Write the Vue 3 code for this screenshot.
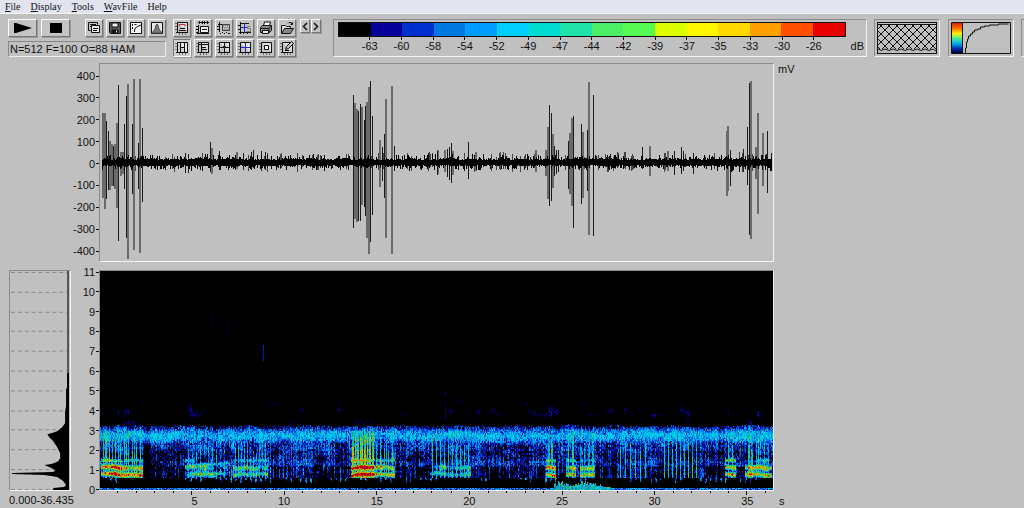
<script setup>
import { onMounted, ref } from 'vue'

const menus = [
  { key: 'F', rest: 'ile' },
  { key: 'D', rest: 'isplay' },
  { key: 'T', rest: 'ools' },
  { key: 'W', rest: 'avFile' },
  { key: '', rest: 'Help' }
]

const palette = ['#000000', '#08009a', '#0030d0', '#0078e0', '#009cff', '#00d0ff', '#00dcd0', '#20e2a8',
  '#4cee68', '#58fa54', '#dcff00', '#fff600', '#ffd800', '#ffa000', '#ff5000', '#e60000']
const levels = ['-63', '-60', '-58', '-54', '-52', '-49', '-47', '-44', '-42', '-39', '-37', '-35', '-33', '-30', '-26']
const millivolts = [400, 300, 200, 100, 0, -100, -200, -300, -400]
const kilohertz = [11, 10, 9, 8, 7, 6, 5, 4, 3, 2, 1, 0]
const seconds = [5, 10, 15, 20, 25, 30, 35]

const frame = 'M2.5 1.5v10M1 11.5h12M2.5 1.5h10v10'
const pinned = 'M.5 2.5h1M.5 5.5h1M.5 8.5h1M4.5 12.5v1M7.5 12.5v1M10.5 12.5v1'
const fileTools = [
  { name: 'Copy', parts: [{ d: 'M1.5 1.5h9v2M1.5 1.5v8h2' }, { d: 'M4.5 4.5h8v7h-8zM6 7.5h5M6 9.5h4', f: '#eee' }, { d: 'M3 3.5h6M3 5.5h1' }] },
  { name: 'Save', parts: [{ d: 'M1.5 1.5h11v11h-10l-1-1z', f: '#555' }, { d: 'M4 2h6v4h-6z', f: '#eee' }, { d: 'M4 9h6v3h-6z', f: '#111' }, { d: 'M8.5 9.5v2', s: '#eee' }] },
  { name: 'Gamma', parts: [{ d: 'M1.5 1.5h11v11h-11z', f: '#f4f4f4' }, { d: 'M3.5 3v2M3.5 6v2M5.5 3.5h2M5.5 11v-2l1-2 1-1 2-1 3-1' }] },
  { name: 'Window', parts: [{ d: 'M1.5 1.5h11v11h-11z', f: '#e8e8e8' }, { d: 'M2 12l3-4 1-4 1-1 1 1 1 4 3 4z', f: '#777', s: '#555' }] }
]
const viewTools = [
  { name: 'Spectrogram', parts: [{ d: frame, f: '#ddd' }, { d: pinned }, { d: 'M4 5.5v-2h6v2', s: '#c03030' }, { d: 'M5 7.5h5M4 9.5h7' }] },
  { name: 'Envelope', parts: [{ d: 'M2 1.5h11M3.5 0v3M6.5 0v3M8.5 0v3M11.5 0v3M2.5 4v8M1 12.5h12' }, { d: 'M4.5 5.5h8v6h-8zM6 8.5h5', f: '#eee' }, { d: 'M0 5.5h2M0 8.5h2M0 11.5h2' }] },
  { name: 'Zoom area', parts: [{ d: 'M2.5 1v10M1 3.5h11' }, { d: 'M5.5 3.5h7v6h-7z', f: '#999', s: '#444' }, { d: 'M7 5.5h1M9 5.5h1M11 5.5h1M6 7.5h1M8 7.5h1M10 7.5h1', s: '#ddd' }, { d: 'M3 12.5h1M5 11.5h1M7 12.5h1M9 11.5h1M11 12.5h2M0 5.5h2M0 8.5h2' }] },
  { name: 'Statistics', parts: [{ d: 'M2.5 1v12M1 11.5h12M0 4.5h2M0 8.5h2M5.5 12v1M9.5 12v1M3 2.5h8' }, { d: 'M6.5 2v9M3 6.5h6', s: '#2424d0' }, { d: 'M12.5 5.5h-3v2h3v3h-4', s: '#777' }] },
  { name: 'Print', parts: [{ d: 'M4.5 5l1-4h6l-1 4', f: '#fff' }, { d: 'M1.5 6.5l2-2h9v5l-2 2h-9z', f: '#888' }, { d: 'M2 7.5h8v4M10.5 7l2-2' }, { d: 'M3.5 9.5h6v3h-6z', f: '#eee' }] },
  { name: 'Open', parts: [{ d: 'M1.5 12.5v-8h4l1 1h4v2', f: '#ddd' }, { d: 'M1.5 12.5l3-5h9l-3 5z', f: '#888' }, { d: 'M8 2.5l1-1h2l1 2M10.5 3.5h2v-2' }] }
]
const gridTools = [
  { name: 'Columns', on: true, parts: [{ d: frame, f: '#e8e8e8' }, { d: pinned }, { d: 'M5.5 2v9M9.5 2v9M6 6.5h3' }] },
  { name: 'Rows', parts: [{ d: frame, f: '#ddd' }, { d: pinned }, { d: 'M3 3.5h9M5.5 2v9M6 6.5h4M6 8.5h5' }] },
  { name: 'Cross', parts: [{ d: frame, f: '#ddd' }, { d: pinned }, { d: 'M3 6.5h9M7.5 2v9M6 5.5h3' }] },
  { name: 'Marker', parts: [{ d: frame, f: '#e8e8e8' }, { d: pinned }, { d: 'M3 6.5h9M7.5 2v9', s: '#2424d0' }] },
  { name: 'Box', parts: [{ d: frame, f: '#ddd' }, { d: pinned }, { d: 'M5.5 4.5h4v4h-4z', f: '#fff' }] },
  { name: 'Edit', parts: [{ d: frame, f: '#ddd' }, { d: pinned }, { d: 'M5.5 8.5l1-3 5-5 2 2-5 5z', f: '#bbb' }, { d: 'M5 9.5h4' }] }
]

// [x, height above zero, depth below zero, heavy stroke]
const spikes = [
  [3, 49, 36, 1], [5, 49, 47, 1], [6, 41, 37, 0], [8, 31, 28, 0], [10, 21, 28, 1], [12, 18, 24, 1], [13, 16, 24, 0],
  [15, 18, 27, 1], [17, 39, 46, 1], [18, 77, 79, 0], [21, 10, 14, 1], [23, 10, 12, 1], [24, 38, 27, 0], [26, 66, 76, 0],
  [28, 78, 97, 1], [32, 38, 32, 0], [34, 83, 88, 1], [38, 19, 27, 0], [40, 83, 91, 1], [42, 34, 40, 0],
  [85, 9, 11, 0], [88, 8, 11, 0], [110, 20, 10, 0], [112, 14, 12, 1], [119, 11, 8, 0], [137, 10, 7, 1], [143, 9, 8, 0],
  [151, 10, 8, 0], [153, 12, 6, 0], [161, 11, 9, 0], [165, 10, 8, 0],
  [253, 67, 66, 0], [255, 59, 57, 1], [257, 53, 60, 1], [258, 51, 59, 0], [260, 58, 59, 0], [262, 55, 43, 1],
  [264, 42, 45, 0], [265, 56, 54, 0], [267, 60, 76, 1], [269, 75, 92, 1], [270, 81, 80, 0], [272, 46, 53, 0],
  [280, 22, 25, 1], [282, 15, 19, 0], [284, 28, 36, 0], [286, 63, 76, 1], [292, 76, 92, 1], [294, 16, 9, 0],
  [337, 11, 13, 0], [338, 12, 12, 1], [345, 12, 10, 1], [347, 13, 15, 0], [349, 15, 18, 0], [351, 19, 21, 0], [353, 11, 13, 1],
  [368, 20, 17, 0], [376, 10, 9, 1], [436, 12, 10, 1], [446, 12, 14, 1], [448, 35, 37, 1], [449, 57, 44, 0], [451, 49, 39, 0],
  [453, 28, 26, 1], [454, 16, 14, 0], [456, 12, 12, 0], [458, 12, 10, 0], [468, 21, 27, 0], [470, 29, 32, 1], [472, 44, 44, 1],
  [473, 46, 66, 0], [481, 38, 42, 0], [483, 30, 36, 1], [487, 32, 29, 0], [489, 80, 73, 1], [493, 67, 74, 0],
  [542, 15, 7, 0], [550, 16, 14, 1], [568, 11, 9, 1], [574, 11, 13, 0], [581, 15, 12, 0], [583, 11, 9, 0], [593, 9, 12, 0],
  [627, 31, 34, 1], [628, 36, 29, 1], [630, 12, 24, 0], [643, 13, 10, 0], [647, 35, 23, 0], [649, 79, 73, 0],
  [651, 81, 77, 1], [656, 15, 17, 1], [658, 49, 52, 1], [663, 29, 24, 1], [667, 31, 31, 0], [671, 9, 7, 0]
]

function generator(seed) {
  let s = seed
  return () => {
    s = (s + 0x6d2b79f5) | 0
    let t = Math.imul(s ^ (s >>> 15), 1 | s)
    t = (t + Math.imul(t ^ (t >>> 7), 61 | t)) ^ t
    return ((t ^ (t >>> 14)) >>> 0) / 4294967296
  }
}

const heavy = spikes.filter(p => p[3]).map(([x, u, d]) => `M${x} ${98 - u}V${98 + d}`).join('')
const fine = spikes.filter(p => !p[3]).map(([x, u, d]) => `M${x}.5 ${98 - u}V${98 + d}`).join('')

const rw = generator(7)
let noise = ''
let faint = ''
let swell = 0.5
for (let x = 2; x < 672; x++) {
  swell = swell * 0.75 + rw() * 0.25
  const burst = (x > 80 && x < 120) || (x > 320 && x < 385) || x > 610 ? 1.3 : 1
  const up = 1 + swell * 3 + rw() ** 3 * 5 * burst
  const down = 1 + swell * 3 + rw() ** 3 * 5 * burst
  noise += `M${x}.5 ${(98 - up).toFixed(0)}V${(99 + down).toFixed(0)}`
  if (rw() < 0.1) faint += `M${x}.5 ${(93 - rw() * 5).toFixed(0)}V${(103 + rw() * 5).toFixed(0)}`
}

const screen = ref(null)

// [start, end, overall level, stripe pitch, tone level]
const calls = [
  [1, 20, 6, 3, 6], [20, 43, 6.5, 4, 4], [85, 128, 3.5, 4, 1.5], [133, 168, 4, 3, 3], [251, 274, 8, 3, 6], [274, 295, 5.5, 4, 4],
  [330, 371, 5.5, 4, 1], [446, 456, 6, 4, 6], [466, 476, 6, 4, 4], [480, 495, 4, 4, 4], [517, 548, 5, 5, 0], [563, 600, 5.5, 4, 0],
  [625, 636, 5, 4, 6], [645, 660, 6, 4, 4], [660, 672, 4, 4, 4]
]

function drawSpectrogram() {
  const canvas = screen.value
  const w = canvas.width
  const h = canvas.height
  const ctx = canvas.getContext('2d')
  const image = ctx.createImageData(w, h)
  const rgb = palette.map(c => [1, 3, 5].map(i => parseInt(c.slice(i, i + 2), 16)))
  const rand = generator(42)
  const bell = (f, c, s) => Math.exp(-((f - c) ** 2) / (2 * s * s))
  const put = (x, y, v) => {
    const k = Math.max(0, Math.min(15, v))
    const a = rgb[Math.floor(k)]
    const b = rgb[Math.min(15, Math.ceil(k))]
    const m = k % 1
    const dim = k > 6 ? 0.8 : 0.98
    const o = (y * w + x) * 4
    for (let i = 0; i < 3; i++) image.data[o + i] = (a[i] * (1 - m) + b[i] * m) * dim
    image.data[o + 3] = 255
  }
  const patch = []
  for (let i = 0; i < 4000; i++) patch.push(rand())
  const smooth = (x, f) => {
    const gx = x / 7
    const gy = f * 3.2
    const ix = Math.floor(gx)
    const iy = Math.floor(gy)
    const at = (i, j) => patch[(i + j * 97) % 4000]
    const tx = gx - ix
    const ty = gy - iy
    return (at(ix, iy) * (1 - tx) + at(ix + 1, iy) * tx) * (1 - ty) + (at(ix, iy + 1) * (1 - tx) + at(ix + 1, iy + 1) * tx) * ty
  }
  for (let x = 0; x < w; x++) {
    const column = rand() - 0.5
    const streak = rand() < 0.2 ? 1.8 : 0
    const call = calls.find(c => x >= c[0] && x < c[1])
    const peak = spikes.reduce((m, p) => (p[0] === x ? Math.max(m, p[1]) : m), 0)
    const quiet = x > 43 && x < 50
    const sparse = x > 43 && x < 85
    const top = 3.3 + smooth(x, 12) * 0.2 - 0.15
    let n = 0
    for (let y = 0; y < h; y++) {
      const f = (h - y) / 19.9
      if (y % 2 === 0 || rand() < 0.3) n = rand() - 0.5
      const s = smooth(x, f) - 0.5
      let v = -3
      if (f < top) {
        v = 4.6 * bell(f, 2.75, 0.28) + n * 4.2 + column * 1.2 + s * 1.8 - (f > 3.1 ? 0.4 : 0)
        v = Math.min(v, 5.8)
        if (f < 2.55) v = Math.max(v, 0.8 + n * 3.8 + column * 2.4 + s * 2.8 + (f > 2 ? 0.8 : 0) - (sparse ? 1 : 0))
        if (f < 1.5 && f > 1.25) v += 0.8
        if (quiet) v -= f < 2.4 ? 2 : 0.8
        if (f < 1.2 && !call) v += streak - 1
        if (f < 0.65) v = smooth(x, 9) > 0.55 && x % 5 < 2 && f > 0.48 - column * 0.2 ? 3 + n * 4 : -1
        if (f < 0.15) v = 2.8 + n * 5 + s * 2
      } else if (f < 4.6) {
        v = s * 4.4 + n * 1.6 - 2 + bell(f, 3.9, 0.18) * 0.9
      }
      if (call && f > 0.65 && f < 3) {
        const on = x % call[3] === 0 || peak > 40
        const fade = Math.min(1, (3.1 - f) / 1.5)
        if (on) v = Math.max(v, call[2] * (0.55 + fade * 0.65) + n * 5 + s * 4)
        else if (f < 1.8) v -= 0.2
        const wobble = (smooth(x, 10) - 0.5) * 0.12
        const tone = Math.max(bell(f, 0.8 + wobble, 0.1), bell(f, 1.15 + wobble, 0.11), bell(f, 1.5, 0.07) * 0.6)
        if (call[4]) v = Math.max(v, (call[2] + call[4] * 1.6) * tone + n * 5 + s * 8 + column * 3 - (on ? 0 : 2))
      }
      if (peak > 35 && f > 2.4 && f < 4) v += f < 3.3 ? 1.4 : 1.2
      if (x > 88 && x < 130) {
        const rise = 0.78 + (x - 88) / 300
        v += bell(f, rise, 0.06) * 2.5 + bell(f, rise + 0.45, 0.06) * 4
      }
      if (x > 453 && x < 512 && f < 0.5) {
        const lobe = Math.max(bell(x, 461, 6), bell(x, 487, 10))
        if (f < 0.14 + lobe * (0.1 + (column + 0.5) * 0.3)) v = 5.5 + n * 6
      }
      if (x === 163 && f > 6.5 && f < 7.3) v = 1.6 + n
      if ((x === 112 || x === 128) && f > 7.7 && f < 8.8) v = n * 2
      if (x === 345 && f > 3.6 && f < 4.9) v = 0.4 + n * 2
      put(x, y, v)
    }
  }
  ctx.putImageData(image, 0, 0)
}

onMounted(drawSpectrogram)

const xTicks = Array.from({ length: 36 }, (_, i) => {
  const x = Math.round((i + 1) * 18.47)
  return `M${x}.5 0v${(i + 1) % 5 ? 2 : 4}`
}).join('')
</script>

<template>
  <div class="app">
    <nav class="menu">
      <button v-for="m in menus" :key="m.rest"><u>{{ m.key }}</u>{{ m.rest }}</button>
    </nav>

    <header class="toolbar">
      <section class="transport">
        <div class="row">
          <button class="tool wide" aria-label="Play"><svg width="18" height="10"><path d="M0 0h2L18 5L2 10H0z" /></svg></button>
          <button class="tool wide" aria-label="Stop"><svg width="12" height="10"><path d="M0 0h12v10H0z" /></svg></button>
          <div class="icons files">
            <button v-for="t in fileTools" :key="t.name" class="tool" :aria-label="t.name">
              <svg width="14" height="14" viewBox="0 0 14 14"><path v-for="(p, i) in t.parts" :key="i" :d="p.d" :fill="p.f || 'none'" :stroke="p.s || '#111'" /></svg>
            </button>
          </div>
        </div>
        <output class="status">N=512 F=100 O=88 HAM</output>
      </section>

      <section class="views">
        <div v-for="(set, r) in [viewTools, gridTools]" :key="r" class="row">
          <div class="icons">
            <button v-for="t in set" :key="t.name" class="tool" :class="{ on: t.on }" :aria-label="t.name">
              <svg width="14" height="14" viewBox="0 0 14 14"><path v-for="(p, i) in t.parts" :key="i" :d="p.d" :fill="p.f || 'none'" :stroke="p.s || '#111'" /></svg>
            </button>
          </div>
          <div v-if="r === 0" class="steps">
            <button class="tool step" aria-label="Previous"><svg width="6" height="9"><path d="M5 1L1.500 4.500L5 8" fill="none" stroke="#111" stroke-width="1.500" /></svg></button>
            <button class="tool step" aria-label="Next"><svg width="6" height="9"><path d="M1 1L4.500 4.500L1 8" fill="none" stroke="#111" stroke-width="1.500" /></svg></button>
          </div>
        </div>
      </section>

      <section class="sunken scale">
        <div class="ramp">
          <svg class="bar" viewBox="0 0 16 1" preserveAspectRatio="none" shape-rendering="crispEdges">
            <rect v-for="(c, i) in palette" :key="c" :x="i" y="0" width="1" height="1" :fill="c" />
          </svg>
          <div class="levels"><span v-for="l in levels" :key="l">{{ l }}</span></div>
        </div>
        <span class="unit">dB</span>
      </section>

      <section class="sunken gauge">
        <svg width="60" height="32" viewBox="0 0 60 32">
          <defs>
            <pattern id="mesh" width="8" height="8" patternUnits="userSpaceOnUse">
              <path d="M-1 -1L9 9M9 -1L-1 9" stroke="#111" fill="none" />
            </pattern>
          </defs>
          <rect x=".5" y=".5" width="59" height="31" fill="none" stroke="#111" />
          <path d="M1 2.500h58" stroke="#111" />
          <rect x="1" y="3" width="58" height="24" fill="url(#mesh)" />
          <path d="M1 27q3 3 7 0q4 3 8 0q4 3 8 0q4 3 8 0q4 3 8 0q4 3 8 0q4 3 8 0l3 2" stroke="#111" fill="none" />
        </svg>
      </section>

      <section class="sunken gauge curve">
        <svg width="60" height="32" viewBox="0 0 60 32">
          <defs>
            <linearGradient id="heat" x1="0" y1="0" x2="0" y2="1">
              <stop offset="0" stop-color="#e02000" /><stop offset=".18" stop-color="#ff7000" /><stop offset=".35" stop-color="#fff000" />
              <stop offset=".5" stop-color="#50f090" /><stop offset=".68" stop-color="#00b0f0" /><stop offset=".85" stop-color="#0030b0" /><stop offset="1" stop-color="#000028" />
            </linearGradient>
          </defs>
          <rect x="1" y="1" width="10" height="30" fill="url(#heat)" />
          <path d="M.5 .5h59v31h-59zM11.500 1v30M14.500 31v-5h1v-6h1v-3h1v-3h2v-2h2v-2h2v-2h3v-1h3v-2h4v-1h5v-1h9v-1h10" fill="none" stroke="#111" />
        </svg>
      </section>
      <section class="sunken edge"></section>
    </header>

    <main class="plots">
      <div class="volts axis"><span v-for="v in millivolts" :key="v">{{ v }}</span></div>
      <div class="sunken wave">
        <svg viewBox="0 0 673 197" preserveAspectRatio="none" role="img" aria-label="Waveform">
          <g fill="none" shape-rendering="crispEdges">
            <path :d="faint" stroke="#444" />
            <path :d="heavy" stroke="#6a6a6a" stroke-width="2" />
            <path :d="fine" stroke="#1c1c1c" />
            <path :d="noise" stroke="#000" />
            <path d="M2 98.500H672" stroke="#000" stroke-width="5" />
          </g>
        </svg>
      </div>
      <span class="mv">mV</span>

      <div class="sunken spectrum">
        <svg viewBox="0 0 61 220" preserveAspectRatio="none" role="img" aria-label="Mean spectrum">
          <g stroke="#8a8a8a" stroke-dasharray="4 3">
            <path v-for="(k, i) in kilohertz" :key="k" :d="`M1 ${Math.round(i * 19.8) + 1}.5h58`" />
          </g>
          <path d="M59 0v220" stroke="#555" stroke-width="2" />
          <path d="M60 102L58 103V117L57 119V135L56 142V153L53 157L48 161L42 163L38 164L40 167L44 171L48 177L51 183V188L49 191L45 193L42 194L35 195L42 198L46 200L44 202L2 203L2 204L35 205L48 207L54 211L57 215L55 217L44 218V220H60z" />
        </svg>
      </div>
      <div class="hertz axis"><span v-for="k in kilohertz" :key="k">{{ k }}</span></div>
      <div class="sunken spectrogram"><canvas ref="screen" width="673" height="219" role="img" aria-label="Spectrogram"></canvas></div>

      <span class="range">0.000-36.435</span>
      <div class="time">
        <svg viewBox="0 0 674 4" preserveAspectRatio="none" shape-rendering="crispEdges"><path :d="xTicks" stroke="#111" /></svg>
        <div class="seconds"><span v-for="s in seconds" :key="s">{{ s }}</span></div>
      </div>
      <span class="sec">s</span>
    </main>
  </div>
</template>

<style>
body {
  margin: 0;
  background: #c0c0c0;
}
</style>

<style scoped>
.app {
  font: 11px/12px "Liberation Sans", Arial, sans-serif;
  color: #111;
  background: #c0c0c0;
  min-height: 100vh;
}
.app * {
  box-sizing: border-box;
}
svg,
canvas {
  display: block;
  flex: none;
}
.menu {
  display: flex;
  gap: 10px;
  padding: 0 5px;
  height: 14px;
  background: #e2e4f0;
  border-bottom: 1px solid #f4f4f4;
}
.menu button {
  padding: 0;
  border: 0;
  background: none;
  color: #111;
  font: 10px/12px "Liberation Serif", "Times New Roman", serif;
}
.toolbar {
  display: flex;
  align-items: flex-start;
  height: 49px;
  padding: 5px 0 0 8px;
}
.row {
  display: flex;
}
.transport {
  width: 158px;
}
.transport .row {
  gap: 4px;
}
.icons {
  display: flex;
  gap: 3px;
}
.files {
  margin-left: auto;
}
.tool {
  display: flex;
  align-items: center;
  justify-content: center;
  width: 18px;
  height: 18px;
  padding: 0;
  border: 1px solid;
  border-color: #fafafa #777 #777 #fafafa;
  background: #c4c4c4;
  box-shadow: 1px 1px 0 #999;
}
.tool.wide {
  width: 29px;
}
.tool.on {
  border-color: #777 #fafafa #fafafa #777;
  background: #d0d0d0;
}
.status {
  display: block;
  height: 16px;
  margin-top: 4px;
  padding: 1px;
  border: 1px solid;
  border-color: #888 #eee #eee #888;
}
.views {
  display: grid;
  gap: 2px;
  width: 150px;
  margin-left: 7px;
}
.views .icons {
  flex: none;
}
.steps {
  display: flex;
  gap: 1px;
  margin-left: 4px;
}
.step {
  width: 10px;
  height: 14px;
}
.sunken {
  border: 1px solid;
  border-color: #8c8c8c #f4f4f4 #f4f4f4 #8c8c8c;
}
.scale {
  display: flex;
  flex: 1;
  height: 38px;
  margin-left: 10px;
  padding: 2px 2px 0 4px;
}
.ramp {
  flex: 1;
}
.bar {
  width: 100%;
  height: 15px;
  border: 1px solid #111;
}
.levels {
  display: grid;
  grid-template-columns: repeat(15, 2fr);
  padding: 0 3.125%;
}
.levels span {
  display: grid;
  justify-items: center;
}
.levels span::before {
  content: "";
  width: 1px;
  height: 3px;
  background: #111;
}
.unit {
  padding: 18px 0 0 5px;
}
.gauge {
  height: 38px;
  margin-left: 7px;
  padding: 2px;
}
.curve {
  margin-left: 8px;
}
.edge {
  width: 3px;
  height: 38px;
  margin-left: 7px;
  border-right: 0;
}
.plots {
  display: grid;
  grid-template-columns: 9px 62px 28px minmax(0, 675fr) 250fr;
}
.axis {
  display: flex;
  flex-direction: column;
  justify-content: space-between;
}
.axis span {
  display: flex;
  align-items: center;
  justify-content: flex-end;
  gap: 1px;
  height: 12px;
}
.axis span::after {
  content: "";
  width: 3px;
  height: 1px;
  background: #111;
}
.volts {
  grid-column: 1 / 4;
  padding: 7px 0 5px;
}
.wave {
  grid-column: 4;
  height: 199px;
}
.wave svg,
.spectrum svg,
.spectrogram canvas {
  width: 100%;
  height: 100%;
}
.mv {
  padding-left: 4px;
}
.spectrum {
  grid-column: 2;
  grid-row: 2;
}
.hertz {
  grid-column: 3;
  grid-row: 2;
  margin: -4px 0 -5px;
}
.spectrogram {
  grid-column: 4;
  grid-row: 2;
  height: 221px;
}
.wave,
.volts {
  margin-bottom: 8px;
}
.range {
  grid-column: 2 / 4;
  grid-row: 3;
  padding-top: 3px;
}
.time {
  grid-column: 4;
  grid-row: 3;
  min-width: 0;
}
.time svg {
  width: 100%;
  height: 4px;
}
.seconds {
  display: flex;
}
.seconds span {
  flex: 5;
  display: flex;
  justify-content: flex-end;
  margin-right: -6px;
  margin-left: 6px;
}
.seconds::after {
  content: "";
  flex: 1.435;
}
.sec {
  grid-column: 5;
  grid-row: 3;
  padding: 4px 0 0 5px;
}
</style>
